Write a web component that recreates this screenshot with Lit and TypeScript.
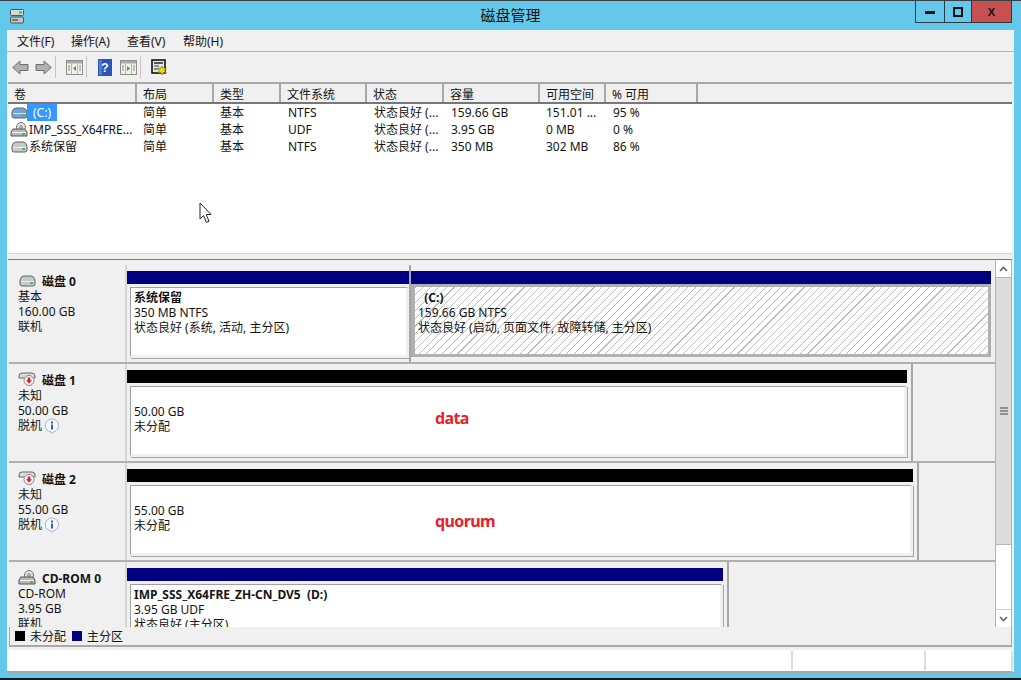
import {LitElement, css, html, svg} from 'lit';
import {customElement} from 'lit/decorators.js';

const volumes = [
  {name: '(C:)', icon: 'sys', layout: '简单', type: '基本', fs: 'NTFS', status: '状态良好 (...', size: '159.66 GB', free: '151.01 ...', pct: '95 %', selected: true},
  {name: 'IMP_SSS_X64FRE...', icon: 'cd', layout: '简单', type: '基本', fs: 'UDF', status: '状态良好 (...', size: '3.95 GB', free: '0 MB', pct: '0 %'},
  {name: '系统保留', icon: 'disk', layout: '简单', type: '基本', fs: 'NTFS', status: '状态良好 (...', size: '350 MB', free: '302 MB', pct: '86 %'},
];

const disks = [
  {
    name: '磁盘 0', icon: 'disk', lines: ['基本', '160.00 GB', '联机'],
    parts: [
      {width: 284, tight: true, bar: 'blue', title: '系统保留', lines: ['350 MB NTFS', '状态良好 (系统, 活动, 主分区)']},
      {width: 580, tight: true, last: true, bar: 'blue', title: '\u00a0\u00a0(C:)', hatched: true, lines: ['159.66 GB NTFS', '状态良好 (启动, 页面文件, 故障转储, 主分区)']},
    ],
  },
  {
    name: '磁盘 1', icon: 'off', lines: ['未知', '50.00 GB', '脱机'], info: true,
    parts: [{width: 786, bar: 'black', title: '', note: 'data', noteTop: 22, lines: ['50.00 GB', '未分配']}],
  },
  {
    name: '磁盘 2', icon: 'off', lines: ['未知', '55.00 GB', '脱机'], info: true,
    parts: [{width: 792, bar: 'black', title: '', note: 'quorum', noteTop: 26, lines: ['55.00 GB', '未分配']}],
  },
  {
    name: 'CD-ROM 0', icon: 'cd', lines: ['CD-ROM', '3.95 GB', '联机'],
    parts: [{width: 602, bar: 'blue', title: 'IMP_SSS_X64FRE_ZH-CN_DV5\u00a0\u00a0(D:)', lines: ['3.95 GB UDF', '状态良好 (主分区)']}],
  },
];

const driveBody = (fill: string, led: string) => svg`
  <path d="M2 7 Q3 3 6 3 H13 Q16 3 17 7 V11 Q17 13 15 13 H4 Q2 13 2 11 Z" fill="${fill}" stroke="#5d6468"/>
  <path d="M3 8.5 H16" stroke="#fff" opacity=".7"/>
  <rect x="12" y="9" width="3" height="2" fill="${led}"/>`;

function driveIcon(kind: string) {
  if (kind === 'cd') {
    return html`<svg class="ico" width="18" height="16" viewBox="0 0 18 16">
      <circle cx="11" cy="5" r="4.5" fill="#dfe4e6" stroke="#777"/>
      <circle cx="11" cy="5" r="1.3" fill="#fff" stroke="#777"/>
      <path d="M1 10 L3 7 H15 L17 10 V14 H1 Z" fill="#b5babd" stroke="#555"/>
      <rect x="12" y="11" width="3" height="2" fill="#5db34a"/>
      <path d="M2 10.5 H16" stroke="#eee"/>
    </svg>`;
  }
  if (kind === 'off') {
    return html`<svg class="ico" width="18" height="16" viewBox="0 0 18 16">
      <path d="M1 4 Q1 1 4 1 H14 Q17 1 17 4 V6 H1 Z" fill="#d8dadb" stroke="#666"/>
      <circle cx="11" cy="8.5" r="5" fill="#f4f4f4" stroke="#888"/>
      <path d="M9.7 5.5 H12.3 V8.2 H14 L11 11.6 L8 8.2 H9.7 Z" fill="#d3202a"/>
    </svg>`;
  }
  const fill = kind === 'sys' ? '#6fa6d6' : '#c6c9ca';
  return html`<svg class="ico" width="18" height="16" viewBox="0 0 18 16">${driveBody(fill, '#5db34a')}</svg>`;
}

const infoIcon = html`<svg class="info" width="16" height="16" viewBox="0 0 16 16">
  <path d="M8 1 A6.5 6.5 0 0 1 10 13.7 L8 15.5 L7.6 14 A6.5 6.5 0 0 1 8 1 Z" fill="#f6f8fb" stroke="#a8b4c2"/>
  <rect x="7" y="3.5" width="2" height="2" fill="#1f66cc"/>
  <rect x="7" y="6.5" width="2" height="5" fill="#1f66cc"/>
</svg>`;

const paneIcon = (side: 'left' | 'right') => html`<svg width="17" height="15" viewBox="0 0 17 15">
  <rect x=".5" y=".5" width="16" height="14" fill="#f1f1ec" stroke="#8f8f8f"/>
  <rect x="1" y="1" width="15" height="2.5" fill="#a9a9a9"/>
  <path d="M5.5 4 V14 M11.5 4 V14" stroke="#b5b5b5"/>
  <path d="M2 6 H4 M2 8 H4 M2 10 H4 M13 6 H15 M13 8 H15 M13 10 H15" stroke="#8a8a8a"/>
  <path d="${side === 'left' ? 'M10 6 V11 L7 8.5 Z' : 'M7 6 V11 L10 8.5 Z'}" fill="#2fa04a"/>
</svg>`;

@customElement('app-root')
export class AppRoot extends LitElement {
  static styles = css`
    :host {
      display: block;
      width: 1021px;
      height: 680px;
      position: relative;
      overflow: hidden;
      box-sizing: border-box;
      background: #63c8ea;
      border-top: 1px solid #3a3f42;
      border-bottom: 2px solid #16181a;
      font: 12px/15px 'Noto Sans', 'Noto Sans CJK SC', sans-serif;
      color: #141414;
    }
    .titlebar {
      height: 29px;
      position: relative;
      display: flex;
      align-items: center;
      justify-content: center;
    }
    .title {
      font-size: 15px;
      color: #111;
    }
    .appicon {
      position: absolute;
      left: 9px;
      top: 7px;
    }
    .winbtns {
      position: absolute;
      top: 0;
      left: 915px;
      display: flex;
      height: 21px;
      border: 1px solid #2f3a40;
      border-top: none;
    }
    .winbtns div {
      display: flex;
      align-items: center;
      justify-content: center;
      border-left: 1px solid #2f3a40;
      width: 26px;
    }
    .winbtns div:first-child {
      border-left: none;
      width: 28px;
    }
    .winbtns .close {
      width: 39px;
      background: #c75050;
      font: bold 11px 'Liberation Sans', sans-serif;
      color: #111;
    }
    .window {
      margin: 0 7px;
      width: 1007px;
      height: 642px;
      display: flex;
      flex-direction: column;
      background: #f0f0f0;
    }
    .menu {
      height: 22px;
      display: flex;
      align-items: center;
      padding: 2px 0 0 10px;
      border-bottom: 1px solid #b2b2c0;
      box-sizing: border-box;
      flex: none;
    }
    .menu span {
      width: 56px;
    }
    .menu span:first-child {
      width: 54px;
    }
    .toolbar {
      height: 30px;
      flex: none;
      display: flex;
      align-items: center;
      padding-left: 5px;
      box-sizing: border-box;
    }
    .sep {
      width: 1px;
      height: 22px;
      background: #c4c4c4;
      margin: 0 3px;
    }
    .listpane {
      height: 169px;
      flex: none;
      margin: 0 2px 0 1px;
      background: #fff;
      border-top: 2px solid #a8a8a8;
      overflow: hidden;
    }
    .cols {
      display: grid;
      grid-template-columns: 129px 77px 67px 86px 77px 96px 66px 92px 1fr;
    }
    .head {
      height: 18px;
      border-bottom: 2px solid #777;
      background: #f0f0f0;
    }
    .head div {
      padding-left: 6px;
      line-height: 22px;
      border-right: 2px solid #a8a8a8;
      white-space: nowrap;
      overflow: hidden;
    }
    .head div:last-child {
      border-right: none;
    }
    .row {
      height: 17px;
      line-height: 17px;
    }
    .row > div {
      padding-left: 6px;
      white-space: nowrap;
      overflow: hidden;
    }
    .row > div:first-child {
      padding-left: 2px;
      display: flex;
      align-items: center;
      gap: 1px;
    }
    .row > div:nth-child(4),
    .row > div:nth-child(5),
    .row > div:nth-child(6),
    .row > div:nth-child(8) {
      padding-left: 7px;
    }
    .ico {
      flex: none;
    }
    .selected {
      background: #3399ff;
      color: #fff;
      padding: 0 6px;
      margin-left: -2px;
    }
    .splitter {
      height: 5px;
      flex: none;
      border-bottom: 1px solid #777;
      margin: 0 2px 0 1px;
      border-top: 1px solid #d8d8d8;
    }
    .lower {
      height: 367px;
      flex: none;
      display: flex;
      margin: 0 2px;
      overflow: hidden;
    }
    .disks {
      flex: 1;
      min-width: 0;
      overflow: hidden;
      padding-top: 2px;
    }
    .disk {
      height: 99px;
      display: flex;
      border-bottom: 2px solid #b0b0b0;
      box-sizing: border-box;
    }
    .disk:first-child {
      height: 102px;
      padding-top: 3px;
    }
    .diskinfo {
      width: 118px;
      flex: none;
      padding: 8px 0 0 9px;
      box-sizing: border-box;
      border-right: 2px solid #d6d6d6;
    }
    .diskname {
      display: flex;
      align-items: center;
      font-weight: 700;
      height: 16px;
      gap: 6px;
    }
    .info {
      vertical-align: -4px;
      margin-left: 2px;
    }
    .part {
      flex: none;
      box-sizing: border-box;
      padding: 6px 4px 0 0;
      border-right: 2px solid #a6a6a6;
    }
    .part.tight {
      padding-right: 0;
    }
    .part.last {
      border-right: none;
    }
    .bar {
      height: 13px;
    }
    .bar.blue {
      background: #000080;
    }
    .bar.black {
      background: #000;
    }
    .box {
      position: relative;
      height: 71px;
      margin: 3px 0 0 3px;
      padding: 2px 0 0 3px;
      background: #fff;
      border-left: 1px solid #a0a0a0;
      border-top: 1px solid #a0a0a0;
      border-right: 3px solid #f0f0f0;
      border-bottom: 3px solid #f0f0f0;
      box-sizing: border-box;
      white-space: nowrap;
      box-shadow: 1px 1px 0 #a6a6a6;
    }
    .box.hatched {
      height: 73px;
      margin: 0;
      border: 3px solid #b0b0b0;
      border-left-width: 4px;
      padding: 3px 0 0 3px;
      box-shadow: none;
      background: repeating-linear-gradient(135deg, #bbb 0 0.8px, #fff 0.8px 5.5px);
    }
    .box b {
      display: block;
      height: 15px;
    }
    .spacer {
      height: 15px;
    }
    .note {
      position: absolute;
      left: 304px;
      font: 700 16px/18px 'Noto Sans', sans-serif;
      letter-spacing: -0.6px;
      color: #e8202c;
    }
    .scroll {
      width: 17px;
      flex: none;
      display: flex;
      flex-direction: column;
      border: 1px solid #b5b5b5;
      border-width: 0 1px;
      box-sizing: border-box;
      background: #fff;
    }
    .scrollbtn {
      height: 17px;
      display: flex;
      align-items: center;
      justify-content: center;
      flex: none;
      background: #fff;
    }
    .thumb {
      height: 266px;
      flex: none;
      background: #dcdcdc;
      border-top: 1px solid #b5b5b5;
      border-bottom: 1px solid #b5b5b5;
      display: flex;
      align-items: center;
      justify-content: center;
    }
    .track {
      flex: 1;
    }
    .legend {
      height: 18px;
      flex: none;
      display: flex;
      align-items: center;
      margin: 0 2px;
      padding-left: 5px;
      border-bottom: 2px solid #a8a8a8;
      border-left: 1px solid #a8a8a8;
      border-right: 1px solid #a8a8a8;
    }
    .swatch {
      width: 10px;
      height: 10px;
      margin-right: 5px;
    }
    .legend span + .swatch {
      margin-left: 6px;
    }
    .status {
      margin: 3px 1px 0 0;
      height: 21px;
      flex: none;
      background: #fff;
      display: flex;
      border-bottom: 2px solid #a8a8a8;
    }
    .status div {
      border-right: 2px solid #dcdcdc;
      margin: 1px 0;
    }
    .status .grow {
      flex: 1;
    }
    .status .mid {
      width: 131px;
    }
    .status .end {
      width: 85px;
    }
    .cursor {
      position: absolute;
      left: 199px;
      top: 201px;
    }
  `;

  renderTable() {
    return html`
      <div class="cols head">
        ${['卷', '布局', '类型', '文件系统', '状态', '容量', '可用空间', '% 可用', ''].map(
          (h) => html`<div>${h}</div>`
        )}
      </div>
      ${volumes.map(
        (v) => html`
          <div class="cols row">
            <div>
              ${driveIcon(v.icon)}
              <span class=${v.selected ? 'selected' : ''}>${v.name}</span>
            </div>
            <div>${v.layout}</div>
            <div>${v.type}</div>
            <div>${v.fs}</div>
            <div>${v.status}</div>
            <div>${v.size}</div>
            <div>${v.free}</div>
            <div>${v.pct}</div>
            <div></div>
          </div>
        `
      )}
    `;
  }

  renderDisk(d: (typeof disks)[number]) {
    return html`
      <div class="disk">
        <div class="diskinfo">
          <div class="diskname">${driveIcon(d.icon)}<span>${d.name}</span></div>
          ${d.lines.map(
            (l, i) => html`<div>${l}${i === 2 && d.info ? infoIcon : ''}</div>`
          )}
        </div>
        ${d.parts.map((p: any) => this.renderPart(p))}
      </div>
    `;
  }

  renderPart(p: any) {
    return html`
      <div class="part ${p.tight ? 'tight' : ''} ${p.last ? 'last' : ''}" style="width:${p.width}px">
        <div class="bar ${p.bar}"></div>
        <div class="box ${p.hatched ? 'hatched' : ''}">
          ${p.title ? html`<b>${p.title}</b>` : html`<div class="spacer"></div>`}
          ${p.lines.map((l: string) => html`<div>${l}</div>`)}
          ${p.note ? html`<span class="note" style="top:${p.noteTop}px">${p.note}</span>` : ''}
        </div>
      </div>
    `;
  }

  render() {
    return html`
      <div class="titlebar">
        <svg class="appicon" width="16" height="16" viewBox="0 0 16 16">
          <rect x="1.5" y="1.5" width="13" height="6" rx="1" fill="#d4d8da" stroke="#555"/>
          <rect x="1.5" y="9" width="13" height="6" rx="1" fill="#c2c6c8" stroke="#555"/>
          <rect x="10" y="3.5" width="3" height="2" fill="#4fae4a"/>
          <rect x="3" y="11" width="6" height="2" fill="#777"/>
        </svg>
        <span class="title">磁盘管理</span>
        <div class="winbtns">
          <div><svg width="10" height="4"><rect width="10" height="3" y="1" fill="#111"/></svg></div>
          <div><svg width="10" height="10"><rect x="1" y="1" width="8" height="8" fill="none" stroke="#111" stroke-width="2"/></svg></div>
          <div class="close">X</div>
        </div>
      </div>
      <div class="window">
        <div class="menu">
          <span>文件(F)</span><span>操作(A)</span><span>查看(V)</span><span>帮助(H)</span>
        </div>
        <div class="toolbar">
          <svg width="17" height="15" viewBox="0 0 17 15"><path d="M.7 7.5 L8 1 V4.5 H16 V10.5 H8 V14 Z" fill="#b0b0b0" stroke="#707070"/></svg>
          <svg width="17" height="15" viewBox="0 0 17 15" style="margin-left:6px"><path d="M16.3 7.5 L9 1 V4.5 H1 V10.5 H9 V14 Z" fill="#b0b0b0" stroke="#707070"/></svg>
          <div class="sep"></div>
          <span style="margin-left:7px;display:flex">${paneIcon('left')}</span>
          <div class="sep"></div>
          <svg width="14" height="17" viewBox="0 0 14 17" style="margin-left:8px"><rect width="14" height="17" fill="#2c55b5"/><rect x="1" y="1" width="3" height="15" fill="#4f7bd8"/><text x="7" y="13" text-anchor="middle" font-size="12" font-weight="700" font-family="Liberation Sans" fill="#fff">?</text></svg>
          <span style="margin-left:8px;display:flex">${paneIcon('right')}</span>
          <div class="sep"></div>
          <svg width="17" height="17" viewBox="0 0 17 17" style="margin-left:7px">
            <rect x="1" y="1" width="13" height="13" fill="#e8e8e2" stroke="#111" stroke-width="1.6"/>
            <rect x="3" y="3" width="9" height="2" fill="#555"/>
            <path d="M3 7 H8 M3 10 H7" stroke="#333"/>
            <path d="M11 7 L12.2 9.2 L15.5 9 L13.6 11.4 L15.5 14 L12.6 13.4 L11 16 L9.6 13.4 L6.8 14 L8.6 11.4 L7 9 L9.8 9.2 Z" fill="#f3d81c" stroke="#6d5d00" stroke-width=".6"/>
          </svg>
        </div>
        <div class="listpane">${this.renderTable()}</div>
        <div class="splitter"></div>
        <div class="lower">
          <div class="disks">${disks.map((d) => this.renderDisk(d))}</div>
          <div class="scroll">
            <div class="scrollbtn"><svg width="9" height="6"><path d="M1 5 L4.5 1.5 L8 5" fill="none" stroke="#666" stroke-width="1.6"/></svg></div>
            <div class="thumb"><svg width="8" height="8"><path d="M0 1 H8 M0 4 H8 M0 7 H8" stroke="#777" stroke-width="1.4"/></svg></div>
            <div class="track"></div>
            <div class="scrollbtn" style="border-top:1px solid #cfcfcf"><svg width="9" height="6"><path d="M1 1 L4.5 4.5 L8 1" fill="none" stroke="#666" stroke-width="1.6"/></svg></div>
          </div>
        </div>
        <div class="legend">
          <div class="swatch" style="background:#000"></div><span>未分配</span>
          <div class="swatch" style="background:#000080"></div><span>主分区</span>
        </div>
        <div class="status">
          <div class="grow"></div><div class="mid"></div><div class="end"></div>
        </div>
      </div>
      <svg class="cursor" width="14" height="22" viewBox="0 0 14 22">
        <path d="M1 1 V17 L4.6 13.6 L7.4 20.4 L10 19.2 L7.2 12.6 L12 12.4 Z" fill="#fff" stroke="#222"/>
      </svg>
    `;
  }
}
